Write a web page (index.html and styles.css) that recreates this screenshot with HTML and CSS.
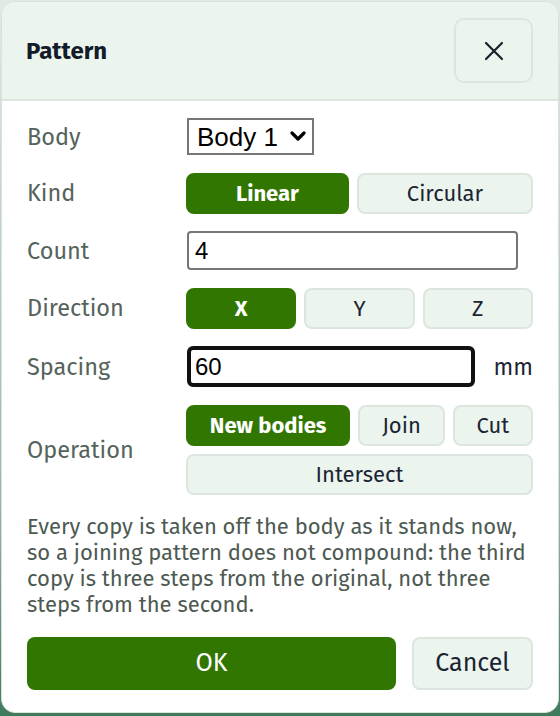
FILE: index.html
```html
<!DOCTYPE html>
<html lang="en">
<head>
  <meta charset="UTF-8" />
  <meta name="viewport" content="width=device-width, initial-scale=1.0"/>
  <title>Pattern</title>
  <link rel="stylesheet" href="styles.css">
</head>
<body>
  <div class="dialog">
    <div class="dialog-header">
      <h2>Pattern</h2>
      <button class="close-btn" aria-label="Close">
        <svg width="20" height="20" viewBox="0 0 20 20"><path d="M2 2 L18 18 M18 2 L2 18" stroke="#1a1f2b" stroke-width="2.2" stroke-linecap="round"/></svg>
      </button>
    </div>

    <div class="dialog-body">
      <div class="form">
        <label class="field-label">Body</label>
        <div class="field">
          <div class="select-wrap">
            <select class="select">
              <option>Body 1</option>
            </select>
            <svg class="chevron" width="16" height="11" viewBox="0 0 16 11"><path d="M2 2 L8 8 L14 2" fill="none" stroke="#000" stroke-width="3.2" stroke-linecap="round" stroke-linejoin="round"/></svg>
          </div>
        </div>

        <label class="field-label">Kind</label>
        <div class="field seg">
          <button class="opt active">Linear</button>
          <button class="opt">Circular</button>
        </div>

        <label class="field-label">Count</label>
        <div class="field">
          <input class="text-input count" type="text" value="4">
        </div>

        <label class="field-label">Direction</label>
        <div class="field seg even">
          <button class="opt active">X</button>
          <button class="opt">Y</button>
          <button class="opt">Z</button>
        </div>

        <label class="field-label">Spacing</label>
        <div class="field with-unit">
          <input class="text-input spacing" type="text" value="60">
          <span class="unit">mm</span>
        </div>

        <label class="field-label">Operation</label>
        <div class="field seg wrap">
          <button class="opt active">New bodies</button>
          <button class="opt">Join</button>
          <button class="opt">Cut</button>
          <button class="opt">Intersect</button>
        </div>
      </div>

      <p class="note">Every copy is taken off the body as it stands now, so a joining pattern does not compound: the third copy is three steps from the original, not three steps from the second.</p>

      <div class="actions">
        <button class="btn-ok">OK</button>
        <button class="btn-cancel">Cancel</button>
      </div>
    </div>
  </div>
</body>
</html>
```

FILE: styles.css
```css
body {
  margin: 0;
  height: 716px;
  overflow: hidden;
  background: linear-gradient(180deg, #e3e9e5 0%, #9bb5a5 70%, #3f7a5b 100%);
  font-family: "Fira Sans", "Noto Sans", sans-serif;
  color: #141b29;
}

.dialog {
  margin: 1px;
  height: 712px;
  background: #fff;
  border: 1px solid #d9e3dc;
  border-radius: 14px;
  overflow: hidden;
  box-sizing: border-box;
}

.dialog-header {
  display: flex;
  align-items: center;
  justify-content: space-between;
  height: 99px;
  padding: 0 25px 0 24px;
  background: #ebf5ee;
  border-bottom: 2px solid #dce6df;
  box-sizing: border-box;
}

.dialog-header h2 {
  margin: 0;
  font-size: 24px;
  font-weight: 700;
  color: #141b29;
}

.close-btn {
  width: 79px;
  height: 65px;
  display: flex;
  align-items: center;
  justify-content: center;
  background: #ebf5ee;
  border: 2px solid #dce6df;
  border-radius: 10px;
  cursor: pointer;
}

.dialog-body {
  padding: 17px 25px 0 25px;
}

.form {
  display: grid;
  grid-template-columns: 159px 1fr;
  row-gap: 17.5px;
  align-items: center;
}

.field-label {
  font-size: 23.5px;
  color: #56635b;
}

.field {
  display: flex;
  align-items: center;
}

.select-wrap {
  position: relative;
  margin-left: 1px;
}

.select {
  appearance: none;
  -webkit-appearance: none;
  font-family: "Liberation Sans", Arial, sans-serif;
  font-size: 26px;
  height: 37px;
  width: 127px;
  color: #000;
  background: #fff;
  border: 2px solid #767676;
  border-radius: 0;
  padding: 0 0 0 8px;
  display: block;
}

.chevron {
  position: absolute;
  right: 8px;
  top: 13px;
  pointer-events: none;
}

.seg {
  gap: 8px;
}

.seg.wrap {
  flex-wrap: wrap;
}

.opt {
  flex: 1 1 auto;
  height: 41px;
  padding: 0 12px;
  font-family: "Fira Sans", "Noto Sans", sans-serif;
  font-size: 22px;
  color: #1c2433;
  background: #ebf5ee;
  border: 2px solid #dce6df;
  border-radius: 8px;
  cursor: pointer;
}

.seg.even .opt {
  flex: 1 1 0;
}

.opt.active {
  background: #317600;
  border-color: #317600;
  color: #fff;
  font-weight: 700;
}

.text-input {
  font-family: "Liberation Sans", Arial, sans-serif;
  font-size: 24px;
  color: #000;
  height: 39px;
  padding: 0 6px;
  margin-left: 1px;
  border: 2px solid #767676;
  border-radius: 4px;
  box-sizing: border-box;
}

.count {
  width: 331px;
}

.spacing {
  width: 288px;
  height: 41px;
  border: 4px solid #111;
  border-radius: 6px;
  padding: 0 4px;
  outline: none;
}

.with-unit {
  justify-content: space-between;
}

.unit {
  font-size: 23px;
  color: #1c2433;
}

.note {
  margin: 19px 0 0 0;
  font-size: 22px;
  line-height: 26px;
  color: #4d5a52;
}

.actions {
  display: flex;
  gap: 16px;
  margin-top: 19px;
}

.btn-ok {
  flex: 1;
  height: 53px;
  font-family: "Fira Sans", "Noto Sans", sans-serif;
  font-size: 25px;
  color: #fff;
  background: #317600;
  border: none;
  border-radius: 8px;
  cursor: pointer;
}

.btn-cancel {
  width: 121px;
  height: 53px;
  font-family: "Fira Sans", "Noto Sans", sans-serif;
  font-size: 25px;
  color: #1c2433;
  background: #ebf5ee;
  border: 2px solid #dce6df;
  border-radius: 8px;
  cursor: pointer;
}
```
